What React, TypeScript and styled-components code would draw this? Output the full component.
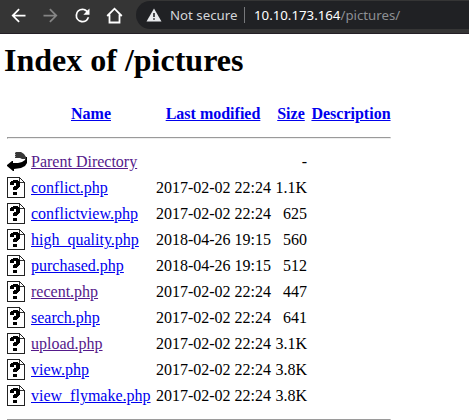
import React from "react";
import styled, { createGlobalStyle } from "styled-components";

const GlobalStyle = createGlobalStyle`
  body { margin: 0; background: #fff; color: #000; overflow: hidden; }
`;
const Window = styled.div`
  width: 469px;
  height: 420px;
  overflow: hidden;
`;
const Toolbar = styled.header`
  display: flex;
  align-items: flex-start;
  box-sizing: border-box;
  height: 34px;
  background: #353535;
  border-bottom: 1px solid #241f26;
`;
const NavButtons = styled.nav`
  display: flex;
  gap: 11px;
  width: 136px;
  box-sizing: border-box;
  padding: 4.5px 0 0 7.5px;
`;
const NavButton = styled.span<{ $disabled?: boolean }>`
  display: block;
  width: 21px;
  height: 21px;
  color: ${(p) => (p.$disabled ? "#858585" : "#fff")};
  svg { display: block; }
`;
const AddressBar = styled.div`
  flex: 1;
  display: flex;
  align-items: center;
  height: 28px;
  margin-top: 1px;
  padding-left: 10px;
  border-radius: 14px 0 0 14px;
  background: #202124;
  font: 13.25px/28px "Noto Sans", sans-serif;
  white-space: nowrap;
`;
const Security = styled.span`
  width: 67px;
  margin-left: 8px;
  color: #d3d5d8;
`;
const Divider = styled.span`
  width: 1px;
  height: 16px;
  margin: 0 9px 0 7px;
  background: #77787b;
`;
const Host = styled.span`
  color: #fff;
`;
const Path = styled.span`
  color: #8c8f93;
`;
const Page = styled.main`
  padding: 8px 4px 0;
  font: 16px "Liberation Serif", serif;
`;
const Title = styled.h1`
  margin: 0 0 21px;
  font-size: 32px;
  line-height: 37px;
`;
const Listing = styled.table`
  table-layout: fixed;
  width: 390px;
  border-spacing: 2px;
  line-height: 18px;
  td, th { padding: 1px; white-space: nowrap; }
`;
const Column = styled.col<{ $width: number }>`
  width: ${(p) => p.$width}px;
`;
const IconCell = styled.td`
  vertical-align: top;
  height: 22px;
  svg { display: block; }
`;
const RightCell = styled.td`
  text-align: right;
`;
const Link = styled.a<{ $visited?: boolean }>`
  color: ${(p) => (p.$visited ? "#551a8b" : "#0000ee")};
  text-decoration: underline;
`;
const Rule = styled.hr`
  margin: 8px 0;
  border: 1px solid;
  border-color: #9a9a9a #eee #eee #9a9a9a;
`;

const UnknownIcon = () => (
  <svg width="20" height="22" viewBox="0 0 20 22" shapeRendering="crispEdges">
    <path d="M1 21h17V6h-1v14H1z" fill="#000" />
    <path d="M.5.5h12l4.500 4.500v15.500H.5z" fill="#fff" stroke="#222" />
    <path d="M12.500.5v4.500h4.500" fill="none" stroke="#333" />
    <path d="M4 4h2V3h5v1h1v1h1v5h-1v1h-1v1h-1v1H6v-3h1V9h2V6H7v2H3V5h1zM6 15h4v3H6z" fill="#000" />
  </svg>
);
const BackIcon = () => (
  <svg width="20" height="22" viewBox="0 0 20 22">
    <path d="M19 6h1v6l-2 3-4 2-7 1v2H6l-6-5v-1l5-4h1v2h5l4-1 3-2z" fill="#000" />
    <path d="M8 1h6l3 2 2 3v2H15l-2-1H8z" fill="#383838" />
    <path d="M8.500 1v6" stroke="#999" strokeDasharray="1 1" />
  </svg>
);

type Entry = { name: string; date?: string; size: string; visited?: boolean };
const entries: Entry[] = [
  { name: "Parent Directory", size: "-", visited: true },
  { name: "conflict.php", date: "2017-02-02 22:24", size: "1.1K" },
  { name: "conflictview.php", date: "2017-02-02 22:24", size: "625" },
  { name: "high_quality.php", date: "2018-04-26 19:15", size: "560" },
  { name: "purchased.php", date: "2018-04-26 19:15", size: "512" },
  { name: "recent.php", date: "2017-02-02 22:24", size: "447", visited: true },
  { name: "search.php", date: "2017-02-02 22:24", size: "641" },
  { name: "upload.php", date: "2017-02-02 22:24", size: "3.1K", visited: true },
  { name: "view.php", date: "2017-02-02 22:24", size: "3.8K" },
  { name: "view_flymake.php", date: "2017-02-02 22:24", size: "3.8K" },
];

const RuleRow = () => (
  <tr><th colSpan={5}><Rule /></th></tr>
);

export default function App() {
  return (
    <Window>
      <GlobalStyle />
      <Toolbar>
        <NavButtons>
          <NavButton>
            <svg width="21" height="21" viewBox="0 0 24 24" fill="currentColor"><path d="M20 11H7.830l5.590-5.590L12 4l-8 8 8 8 1.410-1.410L7.830 13H20z" /></svg>
          </NavButton>
          <NavButton $disabled>
            <svg width="21" height="21" viewBox="0 0 24 24" fill="currentColor"><path d="M4 11h12.170l-5.590-5.590L12 4l8 8-8 8-1.410-1.410L16.170 13H4z" /></svg>
          </NavButton>
          <NavButton>
            <svg width="21" height="21" viewBox="0 0 24 24" fill="currentColor"><path d="M17.650 6.350A7.960 7.960 0 0 0 12 4a8 8 0 1 0 7.730 10h-2.080A6 6 0 1 1 12 6c1.660 0 3.140.69 4.220 1.780L13 11h7V4z" /></svg>
          </NavButton>
          <NavButton>
            <svg width="21" height="21" viewBox="0 0 21 21" fill="none" stroke="currentColor" strokeWidth="1.800"><path d="M3.200 11L10.500 3.700l7.300 7.300M5.500 9.500v8h10v-8" /></svg>
          </NavButton>
        </NavButtons>
        <AddressBar>
          <svg width="16" height="14" viewBox="0 0 16 14"><path d="M8 0.500L15.500 13.500H.5z" fill="#e8eaed" /><path d="M7.200 5h1.600v4H7.200zM7.200 10.200h1.600v1.600H7.200z" fill="#202124" /></svg>
          <Security>Not secure</Security>
          <Divider />
          <Host>10.10.173.164</Host>
          <Path>/pictures/</Path>
        </AddressBar>
      </Toolbar>
      <Page>
        <Title>Index of /pictures</Title>
        <Listing>
          <colgroup>
            <Column $width={22} />
            <Column $width={122} />
            <Column $width={118} />
            <Column $width={34} />
            <Column $width={82} />
          </colgroup>
          <tbody>
            <tr>
              <IconCell as="th" />
              <th><Link>Name</Link></th>
              <th><Link>Last modified</Link></th>
              <th><Link>Size</Link></th>
              <th><Link>Description</Link></th>
            </tr>
            <RuleRow />
            {entries.map((e) => (
              <tr key={e.name}>
                <IconCell>{e.date ? <UnknownIcon /> : <BackIcon />}</IconCell>
                <td><Link $visited={e.visited}>{e.name}</Link></td>
                <RightCell>{e.date}</RightCell>
                <RightCell>{e.size}</RightCell>
                <td />
              </tr>
            ))}
            <RuleRow />
          </tbody>
        </Listing>
      </Page>
    </Window>
  );
}
